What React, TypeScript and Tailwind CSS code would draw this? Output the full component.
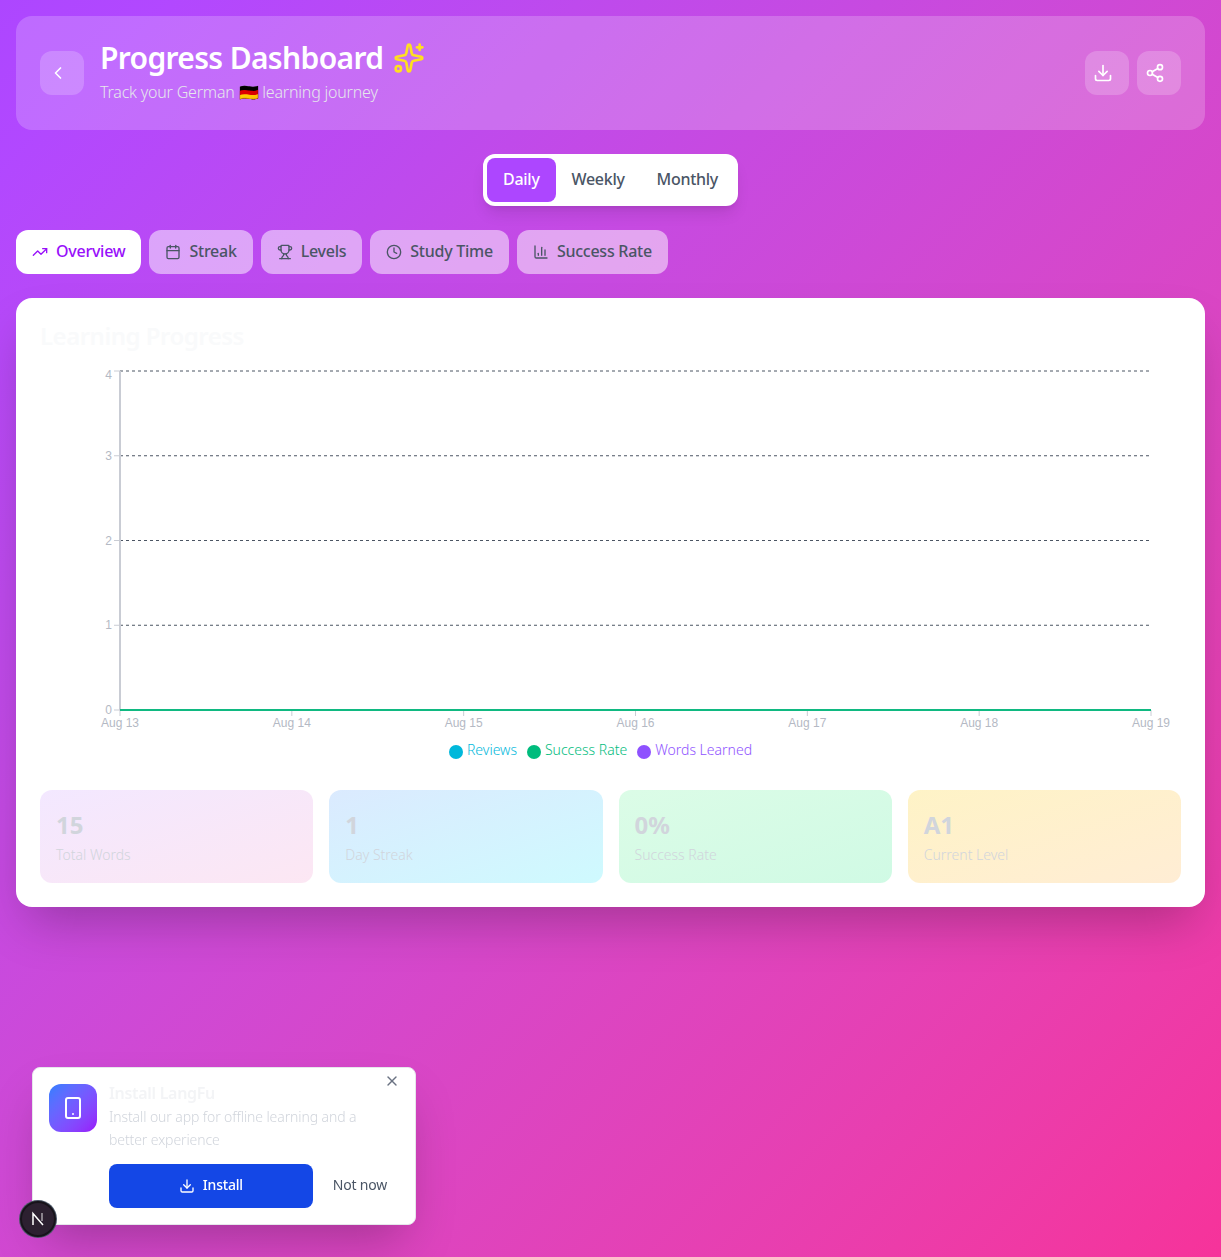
import { ChevronLeft, Sparkles, Download, Share2, TrendingUp, Calendar, Trophy, Clock, ChartColumn, Smartphone, X } from 'lucide-react'

const tabs = [
  { label: 'Overview', icon: TrendingUp, active: true },
  { label: 'Streak', icon: Calendar },
  { label: 'Levels', icon: Trophy },
  { label: 'Study Time', icon: Clock },
  { label: 'Success Rate', icon: ChartColumn },
]

const yTicks = [
  { label: '4', y: 13, textY: 21 },
  { label: '3', y: 97.75, textY: 101.75 },
  { label: '2', y: 182.5, textY: 186.5 },
  { label: '1', y: 267.25, textY: 271.25 },
  { label: '0', y: 352, textY: 356 },
]

const xTicks = ['Aug 13', 'Aug 14', 'Aug 15', 'Aug 16', 'Aug 17', 'Aug 18', 'Aug 19']

const stats = [
  { value: '15', label: 'Total Words', bg: 'from-purple-100 to-pink-100' },
  { value: '1', label: 'Day Streak', bg: 'from-blue-100 to-cyan-100' },
  { value: '0%', label: 'Success Rate', bg: 'from-green-100 to-emerald-100' },
  { value: 'A1', label: 'Current Level', bg: 'from-amber-100 to-orange-100' },
]

function Chart() {
  return (
    <svg width="1141" height="372" className="block font-['Liberation_Sans',sans-serif] text-xs">
      {yTicks.slice(0, 4).map((t) => (
        <line key={t.label} x1="80" x2="1111" y1={t.y} y2={t.y} stroke="#4b5563" strokeDasharray="3 3" />
      ))}
      <line x1="80" x2="80" y1="13" y2="352" stroke="#c9ccd4" strokeWidth="2" />
      {yTicks.map((t) => (
        <g key={t.label}>
          <line x1="74" x2="80" y1={t.y} y2={t.y} stroke="#c9ccd4" />
          <text x="72" y={t.textY} textAnchor="end" fill="#b4b9c4">{t.label}</text>
        </g>
      ))}
      {xTicks.map((label, i) => {
        const x = 80 + (1031 / 6) * i
        return (
          <g key={label}>
            <line x1={x} x2={x} y1="352" y2="358" stroke="#c9ccd4" />
            <text x={x} y="369" textAnchor="middle" fill="#b4b9c4">{label}</text>
          </g>
        )
      })}
      <line x1="80" x2="1111" y1="352" y2="352" stroke="#10b981" strokeWidth="2" />
    </svg>
  )
}

export default function App() {
  return (
    <div className="min-h-screen p-4 bg-gradient-to-br from-purple-500 to-pink-500 font-['Noto_Sans',sans-serif]">
      {/* Header */}
      <div className="flex items-center justify-between p-6 rounded-2xl bg-white/20">
        <div className="flex items-center gap-4">
          <button className="w-11 h-11 p-2 rounded-xl bg-white/20 text-white">
            <ChevronLeft className="w-5 h-5" />
          </button>
          <div>
            <h1 className="flex items-center gap-2.5 mb-1 text-3xl leading-9 font-semibold tracking-[-0.65px] text-white">
              Progress Dashboard
              <Sparkles className="w-8 h-8 text-yellow-300" />
            </h1>
            <p className="text-base leading-[1.6] font-light tracking-[-0.2px] text-gray-200">Track your German 🇩🇪 learning journey</p>
          </div>
        </div>
        <div className="flex gap-2">
          <button className="flex items-center w-11 h-11 p-2 rounded-xl bg-white/20 text-white">
            <Download className="w-5 h-5" />
          </button>
          <button className="flex items-center w-11 h-11 p-2 rounded-xl bg-white/20 text-white">
            <Share2 className="w-5 h-5" />
          </button>
        </div>
      </div>

      {/* Period switch */}
      <div className="flex justify-center mt-6">
        <div className="flex p-1 rounded-xl bg-white shadow-lg tracking-[-0.3px]">
          <button className="h-11 px-4 pb-0.5 rounded-lg bg-purple-500 text-white font-medium">Daily</button>
          <button className="h-11 px-4 pb-0.5 rounded-lg text-gray-600 font-medium">Weekly</button>
          <button className="h-11 px-4 pb-0.5 rounded-lg text-gray-600 font-medium">Monthly</button>
        </div>
      </div>

      {/* Tabs */}
      <div className="flex gap-2 mt-6 tracking-[-0.25px]">
        {tabs.map((tab) => (
          <button
            key={tab.label}
            className={`flex items-center gap-2 h-11 px-4 rounded-xl font-medium ${
              tab.active ? 'bg-white text-purple-600' : 'bg-white/50 text-gray-600'
            }`}
          >
            <tab.icon className="w-4 h-4" />
            <span className="pb-0.5">{tab.label}</span>
          </button>
        ))}
      </div>

      {/* Main card */}
      <div className="mt-6 p-6 rounded-2xl bg-white shadow-2xl">
        <h2 className="h-9 text-2xl leading-[27px] font-semibold tracking-[-0.5px] text-gray-50">Learning Progress</h2>
        <Chart />
        <div className="flex justify-center gap-2.5 h-7 pt-[13px] pr-5 text-sm leading-[1.6] font-light">
          <span className="flex items-center gap-1 text-cyan-500">
            <span className="w-3.5 h-3.5 mt-[3px] rounded-full bg-cyan-500" />
            Reviews
          </span>
          <span className="flex items-center gap-1 text-emerald-500">
            <span className="w-3.5 h-3.5 mt-[3px] rounded-full bg-emerald-500" />
            Success Rate
          </span>
          <span className="flex items-center gap-1 text-violet-500">
            <span className="w-3.5 h-3.5 mt-[3px] rounded-full bg-violet-500" />
            Words Learned
          </span>
        </div>
        <div className="grid grid-cols-4 gap-4 mt-8">
          {stats.map((s) => (
            <div key={s.label} className={`px-4 pt-4 pb-[17px] rounded-xl bg-gradient-to-br ${s.bg}`}>
              <div className="text-2xl leading-[38px] font-bold text-gray-300">{s.value}</div>
              <div className="text-sm leading-[1.6] font-light text-gray-300">{s.label}</div>
            </div>
          ))}
        </div>
      </div>

      {/* Install prompt */}
      <div className="fixed left-8 bottom-8 w-96 p-4 rounded-lg border border-gray-200 bg-white shadow-2xl">
        <button className="absolute top-[5px] right-[15px] text-gray-500">
          <X className="w-4 h-4" />
        </button>
        <div className="flex gap-3">
          <div className="flex items-center justify-center shrink-0 w-12 h-12 rounded-xl bg-gradient-to-br from-blue-500 to-purple-600 text-white">
            <Smartphone className="w-6 h-6" />
          </div>
          <div className="flex-1">
            <h3 className="mb-1 text-base leading-[18px] font-semibold tracking-[-0.3px] text-gray-100">Install LangFu</h3>
            <p className="pr-8 text-sm leading-[1.6] font-light tracking-[-0.1px] text-gray-300">Install our app for offline learning and a better experience</p>
            <div className="flex gap-2 mt-[13px]">
              <button className="flex items-center justify-center gap-2 flex-1 h-11 pb-0.5 rounded-lg bg-blue-700 text-sm font-medium tracking-[-0.2px] text-white">
                <Download className="w-4 h-4 mt-0.5" />
                Install
              </button>
              <button className="px-3 h-11 pb-0.5 text-sm tracking-[-0.2px] text-gray-600">Not now</button>
            </div>
          </div>
        </div>
      </div>

      {/* Dev indicator */}
      <div className="fixed left-5 bottom-5 flex items-center justify-center w-9 h-9 rounded-full bg-[#2c2030] border-2 border-[#17131a] ring-1 ring-gray-600">
        <svg width="16" height="16" viewBox="0 0 16 16" fill="none" stroke="white" strokeWidth="1.5">
          <path d="M3 14V2.5L13 14" />
          <path d="M12 2v8" strokeOpacity="0.6" />
        </svg>
      </div>
    </div>
  )
}
